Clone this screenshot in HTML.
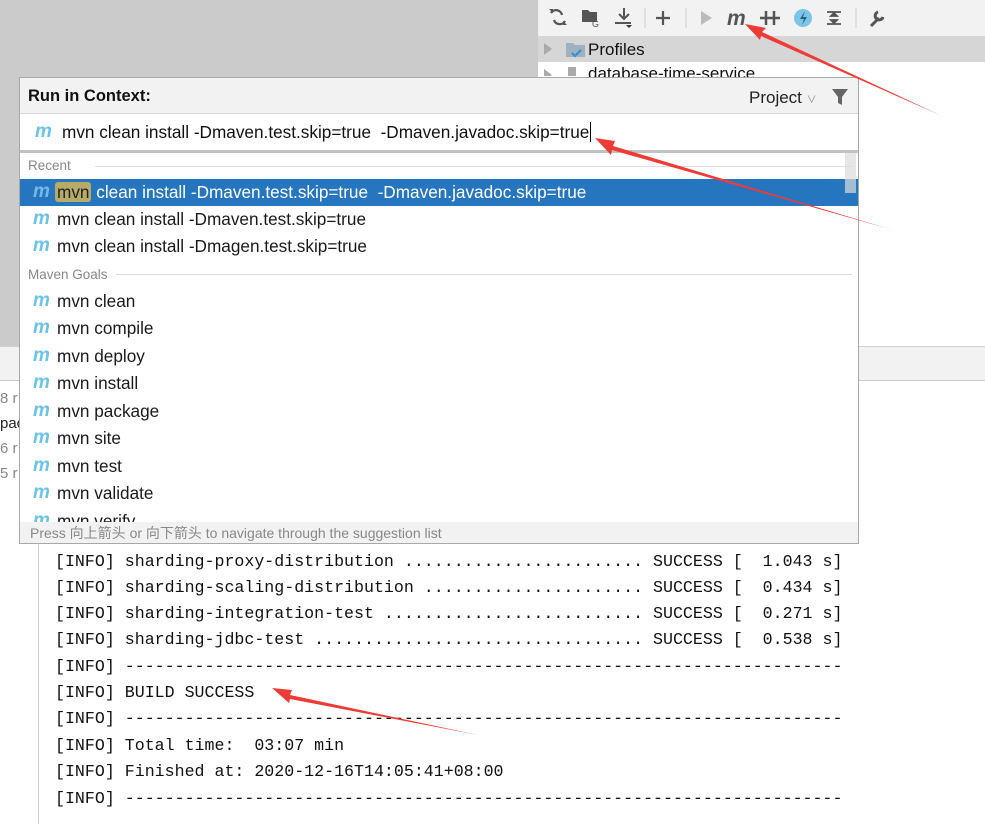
<!DOCTYPE html>
<html><head><meta charset="utf-8"><style>
*{margin:0;padding:0;box-sizing:border-box}
body{width:985px;height:824px;overflow:hidden;position:relative;background:#fff;font-family:"Liberation Sans","Noto Sans CJK SC",sans-serif;}
.abs{position:absolute}
.m{position:absolute;font-style:italic;font-weight:bold;color:#6cc3e6;font-size:19px;font-family:"Liberation Sans",sans-serif;letter-spacing:-1px}
.row{position:absolute;left:0;width:838px;height:27px;font-size:17.2px;color:#1a1a1a;line-height:27px}
.row .m{left:13px;top:-1px}
.row span.t{position:absolute;left:37px}
.con{position:absolute;left:55px;font-family:"Liberation Mono",monospace;font-size:16.63px;color:#111;white-space:pre;line-height:20px}
</style></head><body>
<div class="abs" style="left:0;top:0;width:538px;height:346px;background:#cbcbcb"></div>
<div class="abs" style="left:538px;top:0;width:447px;height:36px;background:#f2f2f2"></div>
<div class="abs" style="left:538px;top:36px;width:447px;height:26px;background:#d6d6d6"></div>
<div class="abs" style="left:0;top:346px;width:985px;height:35px;background:#f2f2f2;border-top:1px solid #d0d0d0;border-bottom:1px solid #c8c8c8"></div>
<div class="abs" style="left:38px;top:381px;width:1px;height:443px;background:#d0d0d0"></div>
<div class="abs" style="left:0;top:386px;font-size:15px;color:#888;line-height:25px">8 r<br><span style="color:#222">pac</span><br>6 r<br>5 r</div>
<svg class="abs" style="left:538px;top:0" width="447" height="36">
<g fill="none" stroke="#555" stroke-width="2.2">
<path d="M13 13 a6 6 0 0 1 11 2 M27 21 a6 6 0 0 1 -11 -1"/>
</g>
<path d="M11 9l4 0 0 4z M29 25l-4 0 0-4z" fill="#555"/>
<path d="M44 10h6l2 2h7v10h-15z" fill="#555"/><text x="54" y="27" font-size="9" fill="#555" font-family="Liberation Sans">G</text>
<path d="M86 8v11 M81 14l5 5 5-5 M77 23h16" stroke="#555" stroke-width="2" fill="none"/><path d="M88 25h6l-3 3z" fill="#333"/>
<line x1="107" y1="8" x2="107" y2="28" stroke="#ccc"/>
<path d="M125 11v14 M118 18h14" stroke="#555" stroke-width="2.2"/>
<line x1="148" y1="8" x2="148" y2="28" stroke="#ccc"/>
<path d="M163 11l11 7-11 7z" fill="#bbb"/>
<text x="189" y="25" font-size="21" font-weight="bold" font-style="italic" fill="#555" font-family="Liberation Sans">m</text>
<path d="M222 18h20 M228 11v14 M236 11v14" stroke="#555" stroke-width="2.5"/>
<circle cx="265" cy="18" r="9" fill="#7cc4e8"/><path d="M267 11l-5 8h4l-2 6 5-8h-4z" fill="#2d5f7c"/>
<path d="M289 12h14 M289 24h14 M296 13l-3 3h6z M296 23l-3-3h6z" stroke="#555" stroke-width="1.8" fill="#555"/>
<line x1="318" y1="8" x2="318" y2="28" stroke="#ccc"/>
<path d="M333 26l8-8 M340 12a4 4 0 1 0 5 5" stroke="#555" stroke-width="3" fill="none"/>
</svg>
<svg class="abs" style="left:538px;top:36px" width="447" height="40">
<path d="M6 7l8 6-8 6z M6 33l8 6-8 6z" fill="#aaa"/>
<path d="M28 7h7l2 2h10v12h-19z" fill="#9fb0c0"/><path d="M34 17l3 3 6-6" stroke="#3a8fd0" stroke-width="2.2" fill="none"/>
<path d="M30 31h8v9h-8z" fill="#aaa"/>
</svg>
<div class="abs" style="left:588px;top:40px;font-size:17px;color:#111">Profiles</div>
<div class="abs" style="left:588px;top:64px;font-size:17px;color:#111;height:13px;overflow:hidden;line-height:20px">database-time-service</div>
<div class="abs" style="left:19px;top:77px;width:840px;height:467px;border:1px solid #a8a8a8;background:#fff;overflow:hidden">
 <div class="abs" style="left:0;top:0;width:838px;height:36px;background:#f2f2f2;border-bottom:1px solid #d8d8d8"></div>
 <div class="abs" style="left:8px;top:9px;font-size:16.5px;font-weight:bold;color:#111">Run in Context:</div>
 <div class="abs" style="left:729px;top:10px;font-size:17px;color:#222">Project <span style="font-size:10px;color:#888">&#8744;</span></div>
 <svg class="abs" style="left:811px;top:10px" width="18" height="18"><path d="M1 1h16l-6 8v8l-4-2v-6z" fill="#666"/></svg>
 <div class="m" style="left:15px;top:43px">m</div>
 <div class="abs" style="left:42px;top:44px;font-size:17.2px;color:#111;white-space:pre">mvn clean install -Dmaven.test.skip=true  -Dmaven.javadoc.skip=true<span style="border-left:1.5px solid #000;margin-left:1px"></span></div>
 <div class="abs" style="left:0;top:72px;width:838px;height:3px;background:#c2c2c2"></div>
 <div class="abs" style="left:8px;top:80px;font-size:13.5px;color:#888">Recent</div>
 <div class="abs" style="left:75px;top:88px;width:757px;height:1px;background:#ddd"></div>
 <div class="row" style="top:101px;background:#2675bf;color:#fff"><div class="m" style="color:#78b8e8">m</div><span class="t" style="white-space:pre"><span style="background:#b7ab6a;color:#222;padding:0 2px;margin-left:-2px;border-radius:3px">mvn</span> clean install -Dmaven.test.skip=true  -Dmaven.javadoc.skip=true</span></div>
 <div class="abs" style="left:825px;top:75px;width:11px;height:40px;background:rgba(220,220,220,0.7)"></div>
 <div class="row" style="top:128px"><div class="m">m</div><span class="t">mvn clean install -Dmaven.test.skip=true</span></div>
 <div class="row" style="top:155px"><div class="m">m</div><span class="t">mvn clean install -Dmagen.test.skip=true</span></div>
 <div class="abs" style="left:8px;top:189px;font-size:13.5px;color:#888">Maven Goals</div>
 <div class="abs" style="left:96px;top:196px;width:736px;height:1px;background:#ddd"></div>
 <div class="row" style="top:210px"><div class="m">m</div><span class="t">mvn clean</span></div>
 <div class="row" style="top:237px"><div class="m">m</div><span class="t">mvn compile</span></div>
 <div class="row" style="top:265px"><div class="m">m</div><span class="t">mvn deploy</span></div>
 <div class="row" style="top:292px"><div class="m">m</div><span class="t">mvn install</span></div>
 <div class="row" style="top:320px"><div class="m">m</div><span class="t">mvn package</span></div>
 <div class="row" style="top:347px"><div class="m">m</div><span class="t">mvn site</span></div>
 <div class="row" style="top:375px"><div class="m">m</div><span class="t">mvn test</span></div>
 <div class="row" style="top:402px"><div class="m">m</div><span class="t">mvn validate</span></div>
 <div class="row" style="top:430px"><div class="m">m</div><span class="t">mvn verify</span></div>
 <div class="abs" style="left:0;top:444px;width:838px;height:22px;background:#f2f2f2;font-size:14px;color:#888;padding-left:10px;line-height:22px">Press 向上箭头 or 向下箭头 to navigate through the suggestion list</div>
</div>
<div class="con" style="top:552px">[INFO] sharding-proxy-distribution ........................ SUCCESS [  1.043 s]</div>
<div class="con" style="top:578px">[INFO] sharding-scaling-distribution ...................... SUCCESS [  0.434 s]</div>
<div class="con" style="top:604px">[INFO] sharding-integration-test .......................... SUCCESS [  0.271 s]</div>
<div class="con" style="top:630px">[INFO] sharding-jdbc-test ................................. SUCCESS [  0.538 s]</div>
<div class="con" style="top:657px">[INFO] ------------------------------------------------------------------------</div>
<div class="con" style="top:683px">[INFO] BUILD SUCCESS</div>
<div class="con" style="top:709px">[INFO] ------------------------------------------------------------------------</div>
<div class="con" style="top:736px">[INFO] Total time:  03:07 min</div>
<div class="con" style="top:762px">[INFO] Finished at: 2020-12-16T14:05:41+08:00</div>
<div class="con" style="top:789px">[INFO] ------------------------------------------------------------------------</div>
<svg class="abs" style="left:0;top:0" width="985" height="824">
<g fill="#ee3b36">
<polygon points="942,116 762,32 766,28 745,24 760,40 761,36"/>
<polygon points="893,230 613,146 615,141 595,138 611,155 612,150"/>
<polygon points="478,735 290,695 292,690 272,688 289,703 290,699"/>
</g>
</svg>
</body></html>
